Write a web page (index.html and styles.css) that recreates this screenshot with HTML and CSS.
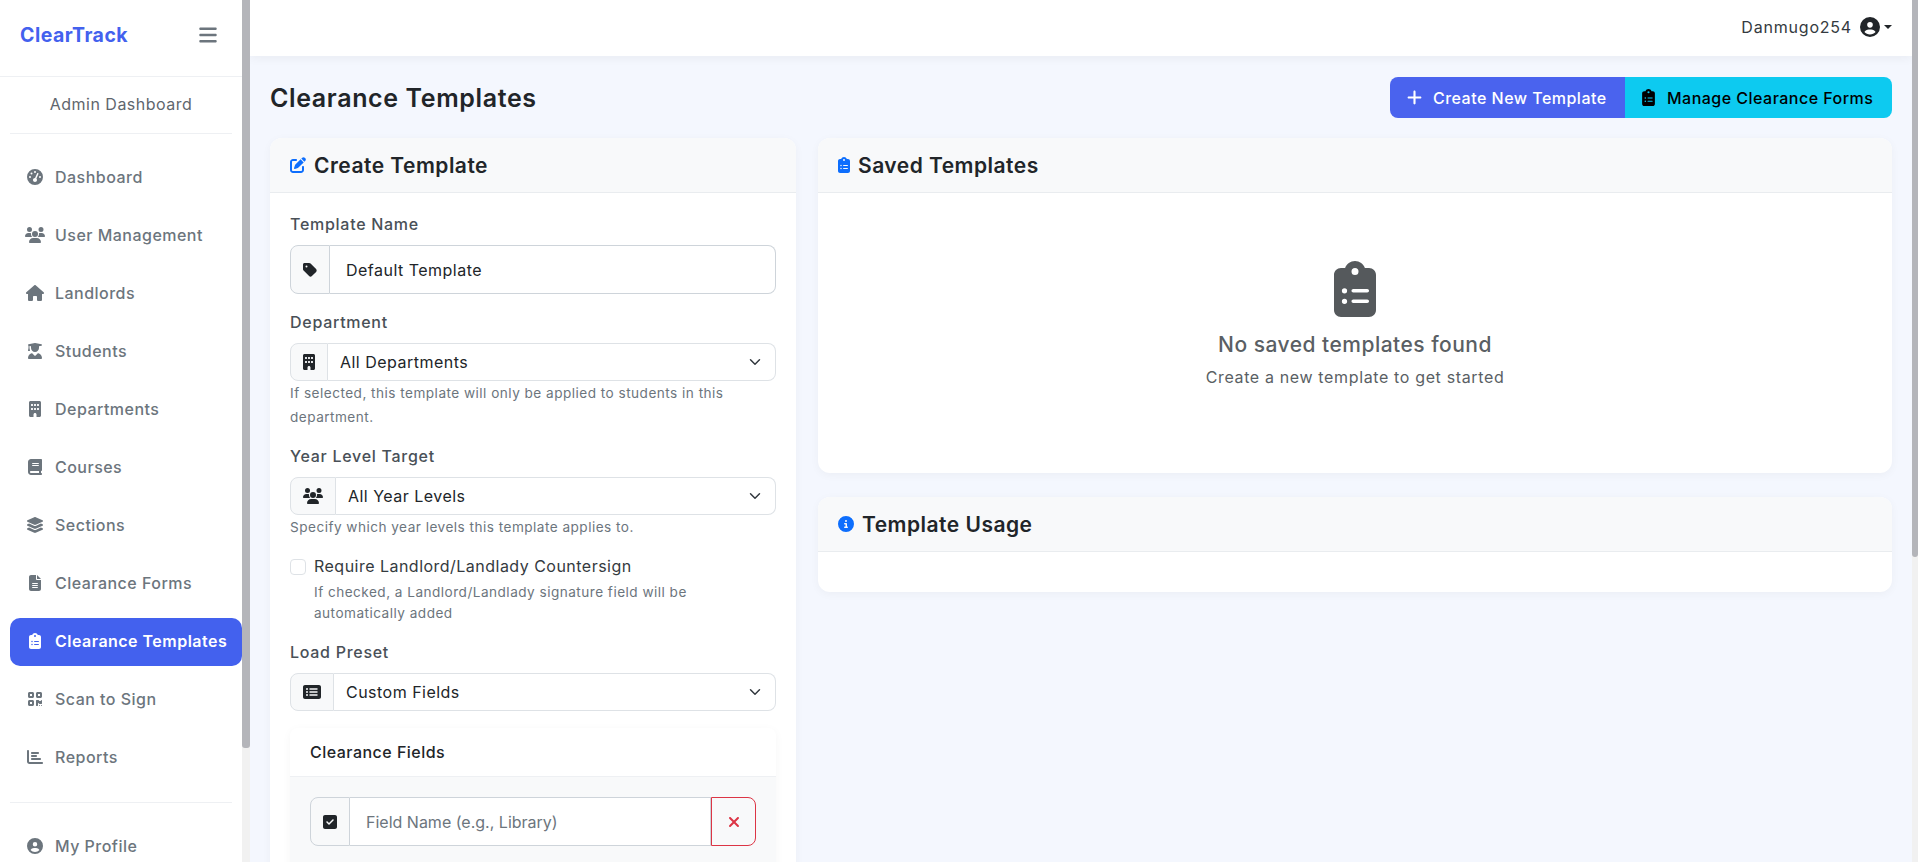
FILE: index.html
```html
<!DOCTYPE html>
<html lang="en">
<head>
  <meta charset="UTF-8" />
  <title>Clearance Templates - ClearTrack</title>
  <meta name="viewport" content="width=device-width, initial-scale=1.0" />
  <link rel="stylesheet" href="styles.css">
</head>
<body>

<!-- Icon sprite -->
<svg class="sprite" aria-hidden="true">
  <symbol id="i-bars" viewBox="0 0 448 512"><path d="M0 96C0 78.3 14.3 64 32 64H416c17.7 0 32 14.3 32 32s-14.3 32-32 32H32C14.3 128 0 113.7 0 96zM0 256c0-17.7 14.3-32 32-32H416c17.7 0 32 14.3 32 32s-14.3 32-32 32H32c-17.7 0-32-14.3-32-32zM448 416c0 17.7-14.3 32-32 32H32c-17.7 0-32-14.3-32-32s14.3-32 32-32H416c17.7 0 32 14.3 32 32z"/></symbol>
  <symbol id="i-gauge" viewBox="0 0 512 512"><path d="M0 256a256 256 0 1 1 512 0A256 256 0 1 1 0 256zM288 96a32 32 0 1 0 -64 0 32 32 0 1 0 64 0zM256 416c35.3 0 64-28.7 64-64c0-17.4-6.9-33.1-18.1-44.6L366 161.7c5.3-12.1-.2-26.3-12.3-31.6s-26.3 .2-31.6 12.3L257.9 288c-.6 0-1.3 0-1.9 0c-35.3 0-64 28.7-64 64s28.7 64 64 64zM176 144a32 32 0 1 0 -64 0 32 32 0 1 0 64 0zM96 288a32 32 0 1 0 0-64 32 32 0 1 0 0 64zm352-32a32 32 0 1 0 -64 0 32 32 0 1 0 64 0z"/></symbol>
  <symbol id="i-users" viewBox="0 0 640 512"><path d="M144 0a80 80 0 1 1 0 160A80 80 0 1 1 144 0zM512 0a80 80 0 1 1 0 160A80 80 0 1 1 512 0zM0 298.7C0 239.8 47.8 192 106.7 192h42.7c15.9 0 31 3.5 44.6 9.7c-1.3 7.2-1.9 14.7-1.9 22.3c0 38.2 16.8 72.5 43.3 96c-.2 0-.4 0-.7 0H21.3C9.6 320 0 310.4 0 298.7zM405.3 320c-.2 0-.4 0-.7 0c26.6-23.5 43.3-57.8 43.3-96c0-7.6-.7-15-1.9-22.3c13.6-6.3 28.7-9.7 44.6-9.7h42.7C592.2 192 640 239.8 640 298.7c0 11.8-9.6 21.3-21.3 21.3H405.3zM224 224a96 96 0 1 1 192 0 96 96 0 1 1 -192 0zM128 485.3C128 411.7 187.7 352 261.3 352H378.7C452.3 352 512 411.7 512 485.3c0 14.7-11.9 26.7-26.7 26.7H154.7c-14.7 0-26.7-11.9-26.7-26.7z"/></symbol>
  <symbol id="i-house" viewBox="0 0 576 512"><path d="M575.8 255.5c0 18-15 32.1-32 32.1h-32l.7 160.2c0 2.7-.2 5.4-.5 8.1V472c0 22.1-17.9 40-40 40H456c-1.1 0-2.2 0-3.3-.1c-1.4 .1-2.8 .1-4.2 .1H416 392c-22.1 0-40-17.9-40-40V448 384c0-17.7-14.3-32-32-32H256c-17.7 0-32 14.3-32 32v64 24c0 22.1-17.9 40-40 40H160 128.1c-1.5 0-3-.1-4.5-.2c-1.2 .1-2.4 .2-3.6 .2H104c-22.1 0-40-17.9-40-40V360c0-.9 0-1.9 .1-2.8V287.6H32c-18 0-32-14-32-32.1c0-9 3-17 10-24L266.4 8c7-7 15-8 22-8s15 2 21 7L564.8 231.5c8 7 12 15 11 24z"/></symbol>
  <symbol id="i-grad" viewBox="0 0 448 512"><path d="M219.3 .5c3.1-.6 6.3-.6 9.4 0l200 40C439.9 42.7 448 52.6 448 64s-8.1 21.3-19.3 23.5L352 102.9V160c0 70.7-57.3 128-128 128s-128-57.3-128-128V102.9L48 93.3v65.1l15.7 78.4c.9 4.7-.3 9.6-3.3 13.3s-7.6 5.9-12.4 5.9H16c-4.8 0-9.3-2.1-12.4-5.9s-4.3-8.6-3.3-13.3L16 158.4V86.6C6.5 83.3 0 74.3 0 64C0 52.6 8.1 42.7 19.3 40.5l200-40zM111.9 327.7c10.5-3.4 21.8 .4 29.4 8.5l71 75.5c6.3 6.7 17 6.7 23.3 0l71-75.5c7.6-8.1 18.9-11.9 29.4-8.5C401 348.6 448 409.4 448 481.3c0 17-13.8 30.7-30.7 30.7H30.7C13.8 512 0 498.2 0 481.3c0-71.9 47-132.7 111.9-153.6z"/></symbol>
  <symbol id="i-building" viewBox="0 0 384 512"><path d="M48 0C21.5 0 0 21.5 0 48V464c0 26.5 21.5 48 48 48h96V432c0-26.5 21.5-48 48-48s48 21.5 48 48v80h96c26.5 0 48-21.5 48-48V48c0-26.5-21.5-48-48-48H48zM64 240c0-8.8 7.2-16 16-16h32c8.8 0 16 7.2 16 16v32c0 8.8-7.2 16-16 16H80c-8.8 0-16-7.2-16-16V240zm112-16h32c8.8 0 16 7.2 16 16v32c0 8.8-7.2 16-16 16H176c-8.8 0-16-7.2-16-16V240c0-8.8 7.2-16 16-16zm80 16c0-8.8 7.2-16 16-16h32c8.8 0 16 7.2 16 16v32c0 8.8-7.2 16-16 16H272c-8.8 0-16-7.2-16-16V240zM80 96h32c8.8 0 16 7.2 16 16v32c0 8.8-7.2 16-16 16H80c-8.8 0-16-7.2-16-16V112c0-8.8 7.2-16 16-16zm80 16c0-8.8 7.2-16 16-16h32c8.8 0 16 7.2 16 16v32c0 8.8-7.2 16-16 16H176c-8.8 0-16-7.2-16-16V112zM272 96h32c8.8 0 16 7.2 16 16v32c0 8.8-7.2 16-16 16H272c-8.8 0-16-7.2-16-16V112c0-8.8 7.2-16 16-16z"/></symbol>
  <symbol id="i-book" viewBox="0 0 448 512"><path d="M96 0C43 0 0 43 0 96V416c0 53 43 96 96 96H384h32c17.7 0 32-14.3 32-32s-14.3-32-32-32V384c17.7 0 32-14.3 32-32V32c0-17.7-14.3-32-32-32H384 96zm0 384H352v64H96c-17.7 0-32-14.3-32-32s14.3-32 32-32zm32-240c0-8.8 7.2-16 16-16H336c8.8 0 16 7.2 16 16s-7.2 16-16 16H144c-8.8 0-16-7.2-16-16zm16 48H336c8.8 0 16 7.2 16 16s-7.2 16-16 16H144c-8.8 0-16-7.2-16-16s7.2-16 16-16z"/></symbol>
  <symbol id="i-layers" viewBox="0 0 576 512"><path d="M264.5 5.2c14.9-6.9 32.1-6.9 47 0l218.6 101c8.5 3.9 13.9 12.4 13.9 21.8s-5.4 17.9-13.9 21.8l-218.6 101c-14.9 6.9-32.1 6.9-47 0L45.9 149.8C37.4 145.8 32 137.3 32 128s5.4-17.9 13.9-21.8L264.5 5.2zM476.9 209.6l53.2 24.6c8.5 3.9 13.9 12.4 13.9 21.8s-5.4 17.9-13.9 21.8l-218.6 101c-14.9 6.9-32.1 6.9-47 0L45.9 277.8C37.4 273.8 32 265.3 32 256s5.4-17.9 13.9-21.8l53.2-24.6 152 70.2c23.4 10.8 50.4 10.8 73.8 0l152-70.2zm-152 198.2l152-70.2 53.2 24.6c8.5 3.9 13.9 12.4 13.9 21.8s-5.4 17.9-13.9 21.8l-218.6 101c-14.9 6.9-32.1 6.9-47 0L45.9 405.8C37.4 401.8 32 393.3 32 384s5.4-17.9 13.9-21.8l53.2-24.6 152 70.2c23.4 10.8 50.4 10.8 73.8 0z"/></symbol>
  <symbol id="i-file" viewBox="0 0 384 512"><path d="M64 0C28.7 0 0 28.7 0 64V448c0 35.3 28.7 64 64 64H320c35.3 0 64-28.7 64-64V160H256c-17.7 0-32-14.3-32-32V0H64zM256 0V128H384L256 0zM112 256H272c8.8 0 16 7.2 16 16s-7.2 16-16 16H112c-8.8 0-16-7.2-16-16s7.2-16 16-16zm0 64H272c8.8 0 16 7.2 16 16s-7.2 16-16 16H112c-8.8 0-16-7.2-16-16s7.2-16 16-16zm0 64H272c8.8 0 16 7.2 16 16s-7.2 16-16 16H112c-8.8 0-16-7.2-16-16s7.2-16 16-16z"/></symbol>
  <symbol id="i-clipboard" viewBox="0 0 384 512"><path d="M192 0c-41.8 0-77.4 26.7-90.5 64H64C28.7 64 0 92.7 0 128V448c0 35.3 28.7 64 64 64H320c35.3 0 64-28.7 64-64V128c0-35.3-28.7-64-64-64H282.5C269.4 26.7 233.8 0 192 0zm0 64a32 32 0 1 1 0 64 32 32 0 1 1 0-64zM72 272a24 24 0 1 1 48 0 24 24 0 1 1 -48 0zm104-16H304c8.8 0 16 7.2 16 16s-7.2 16-16 16H176c-8.8 0-16-7.2-16-16s7.2-16 16-16zM72 368a24 24 0 1 1 48 0 24 24 0 1 1 -48 0zm88 0c0-8.8 7.2-16 16-16H304c8.8 0 16 7.2 16 16s-7.2 16-16 16H176c-8.8 0-16-7.2-16-16z"/></symbol>
  <symbol id="i-qr" viewBox="0 0 448 512"><path d="M0 80C0 53.5 21.5 32 48 32h96c26.5 0 48 21.5 48 48v96c0 26.5-21.5 48-48 48H48c-26.5 0-48-21.5-48-48V80zM64 96v64h64V96H64zM0 336c0-26.5 21.5-48 48-48h96c26.5 0 48 21.5 48 48v96c0 26.5-21.5 48-48 48H48c-26.5 0-48-21.5-48-48V336zm64 16v64h64V352H64zM304 32h96c26.5 0 48 21.5 48 48v96c0 26.5-21.5 48-48 48H304c-26.5 0-48-21.5-48-48V80c0-26.5 21.5-48 48-48zm80 64H320v64h64V96zM256 304c0-8.8 7.2-16 16-16h64c8.8 0 16 7.2 16 16s7.2 16 16 16h32c8.8 0 16-7.2 16-16s7.2-16 16-16s16 7.2 16 16v96c0 8.8-7.2 16-16 16H368c-8.8 0-16-7.2-16-16s-7.2-16-16-16s-16 7.2-16 16v64c0 8.8-7.2 16-16 16H272c-8.8 0-16-7.2-16-16V304zM368 480a16 16 0 1 1 0-32 16 16 0 1 1 0 32zm64 0a16 16 0 1 1 0-32 16 16 0 1 1 0 32z"/></symbol>
  <symbol id="i-chart" viewBox="0 0 512 512"><path d="M32 32c17.7 0 32 14.3 32 32V400c0 8.8 7.2 16 16 16H480c17.7 0 32 14.3 32 32s-14.3 32-32 32H80c-44.2 0-80-35.8-80-80V64C0 46.3 14.3 32 32 32zm96 96c0-17.7 14.3-32 32-32l192 0c17.7 0 32 14.3 32 32s-14.3 32-32 32l-192 0c-17.7 0-32-14.3-32-32zm32 64H288c17.7 0 32 14.3 32 32s-14.3 32-32 32H160c-17.7 0-32-14.3-32-32s14.3-32 32-32zm0 96H416c17.7 0 32 14.3 32 32s-14.3 32-32 32H160c-17.7 0-32-14.3-32-32s14.3-32 32-32z"/></symbol>
  <symbol id="i-user" viewBox="0 0 512 512"><path d="M399 384.2C376.9 345.8 335.4 320 288 320H224c-47.4 0-88.9 25.8-111 64.2c35.2 39.2 86.2 63.8 143 63.8s107.8-24.7 143-63.8zM0 256a256 256 0 1 1 512 0A256 256 0 1 1 0 256zm256 16a72 72 0 1 0 0-144 72 72 0 1 0 0 144z"/></symbol>
  <symbol id="i-plus" viewBox="0 0 448 512"><path d="M256 80c0-17.7-14.3-32-32-32s-32 14.3-32 32V224H48c-17.7 0-32 14.3-32 32s14.3 32 32 32H192V432c0 17.7 14.3 32 32 32s32-14.3 32-32V288H400c17.7 0 32-14.3 32-32s-14.3-32-32-32H256V80z"/></symbol>
  <symbol id="i-edit" viewBox="0 0 512 512"><path d="M471.6 21.7c-21.9-21.9-57.3-21.9-79.2 0L362.3 51.7l97.9 97.9 30.1-30.1c21.9-21.9 21.9-57.3 0-79.2L471.6 21.7zm-299.2 220c-6.1 6.1-10.8 13.6-13.5 21.9l-29.6 88.8c-2.9 8.6-.6 18.1 5.8 24.6s15.9 8.7 24.6 5.8l88.8-29.6c8.2-2.7 15.7-7.4 21.9-13.5L437.7 172.3 339.7 74.3 172.4 241.7zM96 64C43 64 0 107 0 160V416c0 53 43 96 96 96H352c53 0 96-43 96-96V320c0-17.7-14.3-32-32-32s-32 14.3-32 32v96c0 17.7-14.3 32-32 32H96c-17.7 0-32-14.3-32-32V160c0-17.7 14.3-32 32-32h96c17.7 0 32-14.3 32-32s-14.3-32-32-32H96z"/></symbol>
  <symbol id="i-tag" viewBox="0 0 448 512"><path d="M0 80V229.5c0 17 6.7 33.3 18.7 45.3l176 176c25 25 65.5 25 90.5 0L418.7 317.3c25-25 25-65.5 0-90.5l-176-176c-12-12-28.3-18.7-45.3-18.7H48C21.5 32 0 53.5 0 80zm112 32a32 32 0 1 1 0 64 32 32 0 1 1 0-64z"/></symbol>
  <symbol id="i-list" viewBox="0 0 576 512"><path d="M0 96C0 60.7 28.7 32 64 32H512c35.3 0 64 28.7 64 64V416c0 35.3-28.7 64-64 64H64c-35.3 0-64-28.7-64-64V96zM128 288a32 32 0 1 0 0-64 32 32 0 1 0 0 64zm32-128a32 32 0 1 0 -64 0 32 32 0 1 0 64 0zM128 384a32 32 0 1 0 0-64 32 32 0 1 0 0 64zm96-248c-13.3 0-24 10.7-24 24s10.7 24 24 24H448c13.3 0 24-10.7 24-24s-10.7-24-24-24H224zm0 96c-13.3 0-24 10.7-24 24s10.7 24 24 24H448c13.3 0 24-10.7 24-24s-10.7-24-24-24H224zm0 96c-13.3 0-24 10.7-24 24s10.7 24 24 24H448c13.3 0 24-10.7 24-24s-10.7-24-24-24H224z"/></symbol>
  <symbol id="i-check" viewBox="0 0 448 512"><path d="M64 32C28.7 32 0 60.7 0 96V416c0 35.3 28.7 64 64 64H384c35.3 0 64-28.7 64-64V96c0-35.3-28.7-64-64-64H64zM337 209L209 337c-9.4 9.4-24.6 9.4-33.9 0l-64-64c-9.4-9.4-9.4-24.6 0-33.9s24.6-9.4 33.9 0l47 47L303 175c9.4-9.4 24.6-9.4 33.9 0s9.4 24.6 0 33.9z"/></symbol>
  <symbol id="i-x" viewBox="0 0 384 512"><path d="M342.6 150.6c12.5-12.5 12.5-32.8 0-45.3s-32.8-12.5-45.3 0L192 210.7 86.6 105.4c-12.5-12.5-32.8-12.5-45.3 0s-12.5 32.8 0 45.3L146.7 256 41.4 361.4c-12.5 12.5-12.5 32.8 0 45.3s32.8 12.5 45.3 0L192 301.3 297.4 406.6c12.5 12.5 32.8 12.5 45.3 0s12.5-32.8 0-45.3L237.3 256 342.6 150.6z"/></symbol>
  <symbol id="i-info" viewBox="0 0 512 512"><path d="M256 512A256 256 0 1 0 256 0a256 256 0 1 0 0 512zM216 336h24V272H216c-13.3 0-24-10.7-24-24s10.7-24 24-24h48c13.3 0 24 10.7 24 24v88h8c13.3 0 24 10.7 24 24s-10.7 24-24 24H216c-13.3 0-24-10.7-24-24s10.7-24 24-24zm40-208a32 32 0 1 1 0 64 32 32 0 1 1 0-64z"/></symbol>
</svg>

<aside class="sidebar">
  <div class="sidebar-head">
    <span class="brand">ClearTrack</span>
    <svg class="toggle"><use href="#i-bars"/></svg>
  </div>
  <div class="role">Admin Dashboard</div>

  <nav class="nav">
    <a class="nav-item"><svg class="nav-icon"><use href="#i-gauge"/></svg>Dashboard</a>
    <a class="nav-item"><svg class="nav-icon"><use href="#i-users"/></svg>User Management</a>
    <a class="nav-item"><svg class="nav-icon"><use href="#i-house"/></svg>Landlords</a>
    <a class="nav-item"><svg class="nav-icon"><use href="#i-grad"/></svg>Students</a>
    <a class="nav-item"><svg class="nav-icon"><use href="#i-building"/></svg>Departments</a>
    <a class="nav-item"><svg class="nav-icon"><use href="#i-book"/></svg>Courses</a>
    <a class="nav-item"><svg class="nav-icon"><use href="#i-layers"/></svg>Sections</a>
    <a class="nav-item"><svg class="nav-icon"><use href="#i-file"/></svg>Clearance Forms</a>
    <a class="nav-item active"><svg class="nav-icon"><use href="#i-clipboard"/></svg>Clearance Templates</a>
    <a class="nav-item"><svg class="nav-icon"><use href="#i-qr"/></svg>Scan to Sign</a>
    <a class="nav-item"><svg class="nav-icon"><use href="#i-chart"/></svg>Reports</a>
  </nav>

  <div class="nav nav-bottom">
    <a class="nav-item"><svg class="nav-icon"><use href="#i-user"/></svg>My Profile</a>
  </div>
</aside>
<div class="scrollbar scrollbar-side"><div class="thumb"></div></div>

<div class="main">
  <header class="topbar">
    <span class="username">Danmugo254</span>
    <svg class="avatar"><use href="#i-user"/></svg>
    <span class="caret"></span>
  </header>

  <div class="content">
    <div class="page-head">
      <h1>Clearance Templates</h1>
      <div class="btn-group">
        <a class="btn btn-primary"><svg class="btn-icon"><use href="#i-plus"/></svg>Create New Template</a>
        <a class="btn btn-info"><svg class="btn-icon"><use href="#i-clipboard"/></svg>Manage Clearance Forms</a>
      </div>
    </div>

    <div class="columns">
      <section class="card">
        <div class="card-head">
          <svg class="head-icon"><use href="#i-edit"/></svg>
          <h2>Create Template</h2>
        </div>
        <div class="card-body">
          <label class="field-label">Template Name</label>
          <div class="input-group tall">
            <span class="addon addon-name"><svg><use href="#i-tag"/></svg></span>
            <input class="control" type="text" value="Default Template" />
          </div>

          <label class="field-label">Department</label>
          <div class="input-group">
            <span class="addon addon-dept"><svg><use href="#i-building"/></svg></span>
            <select class="control"><option>All Departments</option></select>
          </div>
          <p class="hint">If selected, this template will only be applied to students in this department.</p>

          <label class="field-label">Year Level Target</label>
          <div class="input-group">
            <span class="addon addon-year"><svg><use href="#i-users"/></svg></span>
            <select class="control"><option>All Year Levels</option></select>
          </div>
          <p class="hint">Specify which year levels this template applies to.</p>

          <div class="check-row">
            <input class="checkbox" type="checkbox" id="countersign" />
            <div>
              <label class="check-label" for="countersign">Require Landlord/Landlady Countersign</label>
              <p class="hint hint-check">If checked, a Landlord/Landlady signature field will be automatically added</p>
            </div>
          </div>

          <label class="field-label">Load Preset</label>
          <div class="input-group">
            <span class="addon addon-preset"><svg><use href="#i-list"/></svg></span>
            <select class="control"><option>Custom Fields</option></select>
          </div>

          <div class="fields-card">
            <div class="fields-head">Clearance Fields</div>
            <div class="fields-body">
              <div class="input-group tall">
                <span class="addon addon-name"><svg><use href="#i-check"/></svg></span>
                <input class="control control-mid" type="text" placeholder="Field Name (e.g., Library)" />
                <button class="remove" type="button"><svg><use href="#i-x"/></svg></button>
              </div>
            </div>
          </div>
        </div>
      </section>

      <div class="side-col">
        <section class="card">
          <div class="card-head">
            <svg class="head-icon head-icon-narrow"><use href="#i-clipboard"/></svg>
            <h2>Saved Templates</h2>
          </div>
          <div class="empty">
            <svg class="empty-icon"><use href="#i-clipboard"/></svg>
            <h3>No saved templates found</h3>
            <p>Create a new template to get started</p>
          </div>
        </section>

        <section class="card">
          <div class="card-head">
            <svg class="head-icon"><use href="#i-info"/></svg>
            <h2>Template Usage</h2>
          </div>
          <div class="usage-body"></div>
        </section>
      </div>
    </div>
  </div>
</div>
<div class="scrollbar scrollbar-main"><div class="thumb"></div></div>

</body>
</html>
```

FILE: styles.css
```css
* {
  box-sizing: border-box;
}

html, body {
  height: 100%;
}

body {
  margin: 0;
  display: flex;
  overflow: hidden;
  background: #f4f7fe;
  color: #212529;
  font-family: Inter, "Noto Sans", sans-serif;
  font-size: 16px;
  letter-spacing: 0.03em;
}

.sprite {
  display: none;
}

svg {
  fill: currentColor;
  flex-shrink: 0;
}

/* Scrollbars */
.scrollbar {
  flex-shrink: 0;
  height: 100vh;
  background: #f1f1f1;
}

.scrollbar-side {
  width: 8px;
}

.scrollbar-main {
  width: 6px;
}

.thumb {
  background: #b4b5ba;
  border-radius: 0 0 3px 3px;
}

.scrollbar-side .thumb {
  height: 748px;
}

.scrollbar-main .thumb {
  height: 557px;
}

/* Sidebar */
.sidebar {
  width: 242px;
  flex-shrink: 0;
  height: 100vh;
  overflow: hidden;
  background: #fff;
}

.main {
  flex: 1;
  height: 100vh;
  overflow: hidden;
  min-width: 0;
}

.sidebar-head {
  height: 77px;
  display: flex;
  align-items: center;
  justify-content: space-between;
  padding: 0 25px 6px 20px;
  border-bottom: 1px solid #eef0f3;
}

.brand {
  color: #4361ee;
  font-size: 19.5px;
  font-weight: 700;
}

.toggle {
  width: 18px;
  height: 20px;
  color: #6c757d;
}

.role {
  margin: 0 10px;
  height: 57px;
  padding-bottom: 2px;
  display: flex;
  align-items: center;
  justify-content: center;
  color: #5f666d;
  border-bottom: 1px solid #eef0f3;
}

.nav {
  display: flex;
  flex-direction: column;
  gap: 10px;
  padding: 20px 0 0 10px;
}

.nav-item {
  height: 48px;
  display: flex;
  align-items: center;
  gap: 10px;
  padding: 0 0 2px 15px;
  border-radius: 10px;
  color: #6c757d;
  font-weight: 500;
}

.nav-icon {
  width: 20px;
  height: 16px;
}

.nav-item.active {
  background: #4361ee;
  color: #fff;
  font-weight: 600;
}

.nav-bottom {
  margin: 20px 10px 0;
  padding: 20px 0 0;
  border-top: 1px solid #eef0f3;
}

/* Top bar */
.topbar {
  height: 56px;
  display: flex;
  align-items: center;
  justify-content: flex-end;
  padding: 0 20px 2px 0;
  background: #fff;
  box-shadow: 0 2px 10px rgba(0, 0, 0, 0.05);
}

.username {
  color: #343a40;
  letter-spacing: 0.05em;
}

.avatar {
  width: 20px;
  height: 20px;
  margin-left: 8px;
  color: #212529;
}

.caret {
  margin-left: 4px;
  border-top: 4px solid #212529;
  border-left: 4px solid transparent;
  border-right: 4px solid transparent;
}

/* Content */
.content {
  padding: 21px 20px 20px;
}

.page-head {
  display: flex;
  align-items: center;
  justify-content: space-between;
  margin-bottom: 20px;
}

h1 {
  margin: 0;
  font-size: 25px;
  font-weight: 600;
  letter-spacing: 0.025em;
}

.btn-group {
  display: flex;
}

.btn {
  height: 41px;
  display: flex;
  align-items: center;
  gap: 11px;
  font-weight: 500;
}

.btn-primary {
  width: 235px;
  padding-left: 17px;
  background: #4a63ee;
  color: #fff;
  border-radius: 8px 0 0 8px;
}

.btn-info {
  width: 267px;
  padding-left: 16px;
  background: #0dcaf0;
  color: #000;
  border-radius: 0 8px 8px 0;
}

.btn-icon {
  width: 15px;
  height: 17px;
}

.columns {
  display: grid;
  grid-template-columns: 526px 1fr;
  gap: 22px;
  align-items: start;
}

.side-col {
  display: flex;
  flex-direction: column;
  gap: 24px;
}

.card {
  background: #fff;
  border-radius: 12px;
  box-shadow: 0 2px 10px rgba(0, 0, 0, 0.04);
  overflow: hidden;
}

.card-head {
  height: 55px;
  display: flex;
  align-items: center;
  gap: 8px;
  padding: 0 20px;
  background: #f8f9fa;
  border-bottom: 1px solid #e9ecef;
}

h2 {
  margin: 0;
  font-size: 21px;
  font-weight: 600;
}

.head-icon {
  width: 16px;
  height: 16px;
  color: #0d6efd;
}

.head-icon-narrow {
  width: 12px;
}

/* Form */
.card-body {
  padding: 20px;
}

.field-label {
  display: block;
  height: 22px;
  line-height: 22px;
  margin-bottom: 10px;
  color: #495057;
  font-weight: 500;
  letter-spacing: 0.045em;
}

.input-group {
  display: flex;
  height: 38px;
}

.input-group.tall {
  height: 49px;
  margin-bottom: 17px;
}

.addon {
  display: flex;
  align-items: center;
  justify-content: center;
  background: #f8f9fa;
  border: 1px solid #dee2e6;
  border-radius: 8px 0 0 8px;
  color: #212529;
}

.addon svg {
  width: 16px;
  height: 16px;
}

.addon-name {
  width: 40px;
}

.addon-dept {
  width: 38px;
}

.addon-year {
  width: 46px;
}

.addon-year svg {
  width: 20px;
}

.addon-preset {
  width: 44px;
}

.addon-preset svg {
  width: 18px;
}

.control {
  flex: 1;
  min-width: 0;
  border: 1px solid #dee2e6;
  border-left: 0;
  border-radius: 0 8px 8px 0;
  outline: 0;
  background-color: #fff;
  padding: 0 16px;
  color: #212529;
  font-family: inherit;
  font-size: 16px;
  letter-spacing: inherit;
}

.control-mid {
  border-radius: 0;
}

.tall .addon,
.tall .control {
  border-color: #ced4da;
}

.control::placeholder {
  color: #6c757d;
  letter-spacing: 0;
}

select.control {
  appearance: none;
  padding-left: 12px;
  background-image: url("data:image/svg+xml,%3csvg xmlns='http://www.w3.org/2000/svg' viewBox='0 0 16 16'%3e%3cpath fill='none' stroke='%23343a40' stroke-linecap='round' stroke-linejoin='round' stroke-width='2' d='m2 5 6 6 6-6'/%3e%3c/svg%3e");
  background-repeat: no-repeat;
  background-position: right 12px center;
  background-size: 16px 12px;
}

.hint {
  margin: 0 0 16px;
  color: #6c757d;
  font-size: 13.6px;
  line-height: 24px;
  letter-spacing: 0.035em;
}

.check-row {
  display: flex;
  gap: 8px;
  margin-bottom: 17px;
}

.checkbox {
  appearance: none;
  width: 16px;
  height: 16px;
  margin: 4px 0 0;
  flex-shrink: 0;
  border: 1px solid #dee2e6;
  border-radius: 4px;
  background: #fff;
}

.check-label {
  display: block;
  line-height: 22px;
  color: #343a40;
}

.hint-check {
  margin: 5px 0 0;
  line-height: 21px;
}

.fields-card {
  margin-top: 17px;
  border-radius: 8px;
  box-shadow: 0 2px 10px rgba(0, 0, 0, 0.04);
  overflow: hidden;
}

.fields-head {
  height: 49px;
  display: flex;
  align-items: center;
  padding: 0 20px;
  border-bottom: 1px solid #eef0f3;
  font-weight: 500;
}

.fields-body {
  padding: 20px;
  background: #f8f9fa;
}

.remove {
  width: 45px;
  display: flex;
  align-items: center;
  justify-content: center;
  padding: 0;
  border: 1px solid #dc3545;
  border-radius: 0 8px 8px 0;
  background: transparent;
  color: #dc3545;
}

.remove svg {
  width: 12px;
  height: 16px;
}

/* Right column */
.empty {
  height: 280px;
  padding-top: 68px;
  display: flex;
  flex-direction: column;
  align-items: center;
  color: #5a5f64;
}

.empty-icon {
  width: 42px;
  height: 56px;
  color: #55595c;
}

h3 {
  margin: 15px 0 0;
  font-size: 21px;
  font-weight: 500;
}

.empty p {
  margin: 10px 0 0;
  letter-spacing: 0.04em;
}

.usage-body {
  height: 40px;
}
```
